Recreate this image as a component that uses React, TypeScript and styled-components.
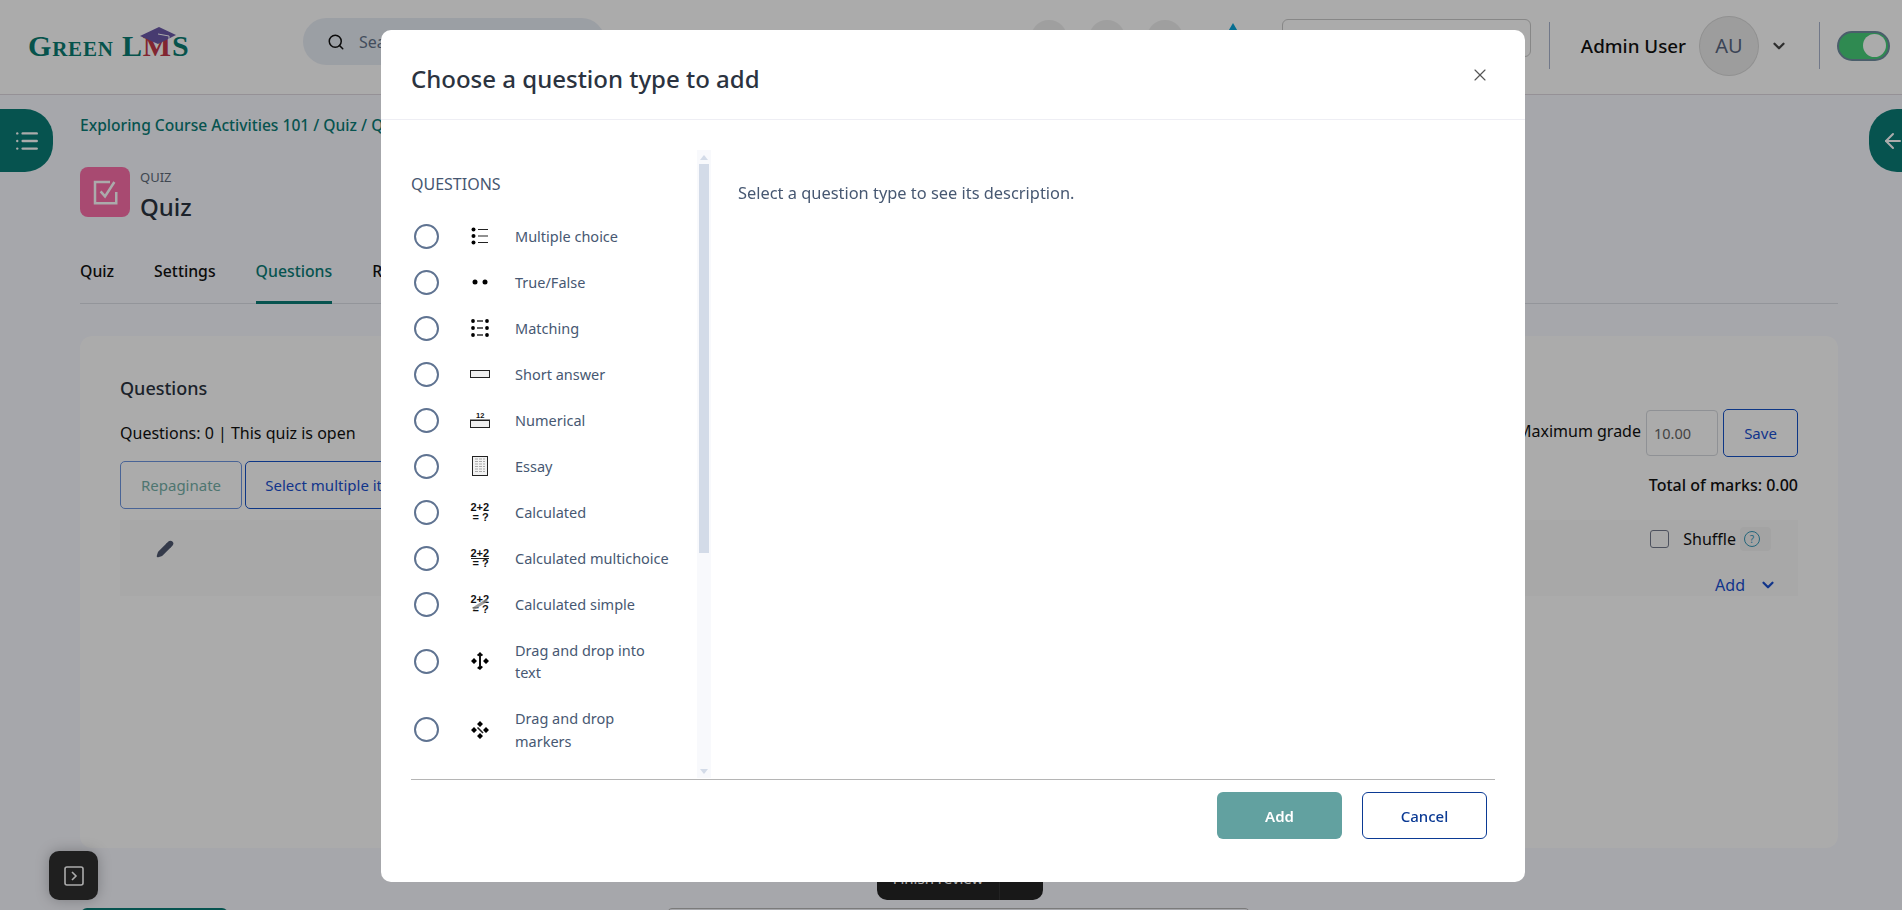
import styled, { createGlobalStyle } from 'styled-components';
import { ChevronDown, Search, X, ArrowLeft, List, Pencil } from 'lucide-react';

const GlobalStyle = createGlobalStyle`
  html, body {
    margin: 0;
    height: 100%;
    overflow: hidden;
    background: #f8f9ff;
    font-family: "Noto Sans", "Open Sans", sans-serif;
  }
  * { box-sizing: border-box; }
`;

const Page = styled.div`
  height: 910px;
  overflow: hidden;
  position: relative;
`;

const Header = styled.header`
  height: 95px;
  background: #fff;
  border-bottom: 1px solid #ded9e0;
  display: flex;
  align-items: center;
  padding: 0 12px 3px 28px;
`;

const Logo = styled.div`
  width: 162px;
  height: 36px;
  margin-top: 0;
  display: flex;
  align-items: center;
  position: relative;
  font-family: "Liberation Serif", serif;
  font-weight: 700;
  font-size: 30px;
  font-variant: small-caps;
  letter-spacing: 0.8px;
  color: #0a7d72;
  white-space: nowrap;
`;

const LogoM = styled.span`
  color: #c23a4a;
`;

const LogoCap = styled.svg`
  position: absolute;
  left: 112px;
  top: -2px;
`;

const SearchBox = styled.div`
  width: 302px;
  height: 47px;
  margin-left: 113px;
  margin-top: -8px;
  border-radius: 24px;
  background: #e8edf5;
  display: flex;
  align-items: center;
  gap: 14px;
  padding-left: 24px;
  color: #64748b;
  font-size: 16px;
  svg { color: #111; }
`;

const Circles = styled.div`
  display: flex;
  gap: 22px;
  margin-left: 426px;
  margin-top: -15px;
`;

const CircleIcon = styled.div`
  width: 36px;
  height: 36px;
  border-radius: 50%;
  background: #eee;
`;

const Diamond = styled.div`
  width: 0;
  height: 0;
  margin-left: 43px;
  margin-top: -33px;
  border-left: 7px solid transparent;
  border-right: 7px solid transparent;
  border-bottom: 12px solid #0aa5d8;
`;

const CourseBox = styled.div`
  width: 249px;
  height: 38px;
  margin: -15px 18px 0 42px;
  border: 1px solid #c9c9c9;
  border-radius: 6px;
`;

const Divider = styled.div`
  width: 1px;
  height: 47px;
  background: #a9b4cc;
`;

const UserName = styled.span`
  font-size: 18.8px;
  font-weight: 500;
  color: #111;
  margin-left: 31px;
`;

const Avatar = styled.div`
  width: 60px;
  height: 60px;
  margin-left: 13px;
  border-radius: 50%;
  background: #ebebeb;
  border: 1px solid #d8d8d8;
  display: flex;
  align-items: center;
  justify-content: center;
  font-size: 20px;
  color: #596680;
`;

const UserChevron = styled(ChevronDown)`
  margin: 0 31px 0 11px;
  color: #444;
`;

const Toggle = styled.div`
  width: 53px;
  height: 30px;
  margin-left: 17px;
  border-radius: 15px;
  background: #46ce7a;
  border: 2px solid #6f8ca0;
  display: flex;
  align-items: center;
  justify-content: flex-end;
  padding-right: 2px;
  &::after {
    content: '';
    width: 23px;
    height: 23px;
    border-radius: 50%;
    background: #fff;
  }
`;

const SideBubble = styled.div<{ $right?: boolean }>`
  position: absolute;
  top: 109px;
  ${(p) => (p.$right ? 'right: -31px;' : 'left: 0;')}
  width: ${(p) => (p.$right ? '64px' : '53px')};
  height: 63px;
  background: #0a7d77;
  border-radius: ${(p) => (p.$right ? '28px' : '0 28px 28px 0')};
  display: flex;
  align-items: center;
  justify-content: ${(p) => (p.$right ? 'flex-start' : 'center')};
  padding-left: ${(p) => (p.$right ? '12px' : '0')};
  color: #fff;
`;

const Main = styled.main`
  padding: 0 64px 0 80px;
`;

const Breadcrumb = styled.div`
  margin-top: 19px;
  height: 22px;
  line-height: 22px;
  font-size: 15.6px;
  font-weight: 500;
  color: #0a7d77;
  white-space: nowrap;
`;

const ActivityHead = styled.div`
  display: flex;
  gap: 10px;
  height: 50px;
  margin-top: 31px;
`;

const ActivityIcon = styled.div`
  width: 50px;
  height: 50px;
  border-radius: 8px;
  background: #fb6fa9;
  display: flex;
  align-items: center;
  justify-content: center;
  color: #fff;
`;

const ActivityKind = styled.div`
  font-size: 13px;
  line-height: 18px;
  color: #5f6b7a;
  margin-top: 1px;
`;

const ActivityName = styled.div`
  font-size: 24px;
  line-height: 32px;
  font-weight: 500;
  color: #2b3340;
  margin-top: 5px;
`;

const Tabs = styled.div`
  display: flex;
  gap: 40px;
  margin-top: 41px;
  height: 46px;
  border-bottom: 1px solid #dcdfe6;
`;

const Tab = styled.div<{ $active?: boolean }>`
  font-size: 15.8px;
  font-weight: 500;
  line-height: 26px;
  height: 46px;
  color: ${(p) => (p.$active ? '#0a7d77' : '#111')};
  border-bottom: ${(p) => (p.$active ? '3px solid #0a7d77' : 'none')};
`;

const Card = styled.section`
  margin-top: 32px;
  height: 512px;
  background: #fff;
  border-radius: 12px;
  padding: 39px 40px 40px;
`;

const TopRow = styled.div`
  display: flex;
  justify-content: space-between;
`;

const CardTitle = styled.div`
  font-size: 18px;
  line-height: 26px;
  font-weight: 500;
  color: #2b3340;
`;

const QuizStatus = styled.div`
  margin-top: 20px;
  font-size: 16px;
  line-height: 24px;
  color: #111;
`;

const GradeArea = styled.div`
  display: flex;
  flex-direction: column;
  align-items: flex-end;
  margin-top: 34px;
`;

const GradeRow = styled.div`
  display: flex;
  align-items: center;
  gap: 5px;
  font-size: 16px;
  color: #111;
`;

const GradeLabel = styled.span`
  margin-bottom: 4px;
`;

const GradeInput = styled.div`
  width: 72px;
  height: 46px;
  border: 1px solid #d6d9de;
  border-radius: 4px;
  display: flex;
  align-items: center;
  padding-left: 7px;
  font-size: 14.5px;
  color: #666;
`;

const OutlineButton = styled.div<{ $faded?: boolean; $width: number }>`
  width: ${(p) => p.$width}px;
  height: 48px;
  flex-shrink: 0;
  border: 1px solid ${(p) => (p.$faded ? '#6e95e0' : '#1652c8')};
  border-radius: 5px;
  display: flex;
  align-items: center;
  justify-content: center;
  font-size: 15px;
  color: ${(p) => (p.$faded ? '#75b0a8' : '#1a4fd0')};
`;

const Totals = styled.div`
  margin-top: 16px;
  font-size: 16px;
  line-height: 24px;
  font-weight: 500;
  color: #111;
`;

const ButtonRow = styled.div`
  display: flex;
  gap: 3px;
  margin-top: 16px;
`;

const SlotBar = styled.div`
  margin-top: 11px;
  height: 76px;
  background: #fbfbfb;
  display: flex;
  justify-content: space-between;
  padding: 20px 15px 0 36px;
`;

const SlotPencil = styled(Pencil)`
  color: #4f5870;
  fill: #4f5870;
`;

const SlotTools = styled.div`
  display: flex;
  flex-direction: column;
  align-items: flex-end;
`;

const ShuffleRow = styled.div`
  display: flex;
  align-items: center;
  height: 24px;
  font-size: 16px;
  color: #111;
  margin-top: -13px;
  margin-right: 12px;
`;

const FakeCheck = styled.div`
  width: 19px;
  height: 18px;
  margin-right: 14px;
  border: 1.5px solid #747a8c;
  border-radius: 3px;
`;

const HelpBox = styled.div`
  width: 31px;
  height: 24px;
  margin-left: 4px;
  padding-left: 4px;
  background: #f4f4f4;
  border-radius: 4px;
  display: flex;
  align-items: center;
`;

const HelpDot = styled.span`
  width: 16px;
  height: 16px;
  border: 1.5px solid #3498b8;
  border-radius: 50%;
  display: flex;
  align-items: center;
  justify-content: center;
  font-size: 10px;
  color: #3498b8;
`;

const AddLink = styled.div`
  margin-top: 22px;
  margin-right: 6px;
  display: flex;
  align-items: center;
  gap: 14px;
  font-size: 16px;
  line-height: 24px;
  color: #1a4fd0;
`;

const BottomBar = styled.div`
  position: absolute;
  left: 877px;
  top: 856px;
  width: 166px;
  height: 44px;
  background: #242424;
  border-radius: 10px;
  display: flex;
  align-items: center;
`;

const BottomLabel = styled.div`
  width: 123px;
  height: 100%;
  border-right: 1px solid #333;
  display: flex;
  align-items: center;
  justify-content: center;
  color: #fff;
  font-size: 15px;
`;

const GreenStub = styled.div`
  position: absolute;
  left: 81px;
  top: 908px;
  width: 147px;
  height: 10px;
  border-radius: 6px 6px 0 0;
  background: #0a7d77;
`;

const OutlineStub = styled.div`
  position: absolute;
  left: 667px;
  top: 908px;
  width: 583px;
  height: 10px;
  border: 1px solid #b8b8b8;
  border-radius: 6px;
`;

const FloatButton = styled.div`
  position: absolute;
  left: 49px;
  top: 851px;
  width: 49px;
  height: 49px;
  border-radius: 10px;
  background: #2f2f2f;
  color: #fff;
  display: flex;
  align-items: center;
  justify-content: center;
  box-shadow: 0 0 14px rgba(0, 0, 0, 0.25);
`;

const Backdrop = styled.div`
  position: fixed;
  inset: 0;
  background: rgba(0, 0, 0, 0.33);
`;

const Modal = styled.div`
  position: fixed;
  left: 381px;
  top: 30px;
  width: 1144px;
  height: 852px;
  background: #fff;
  border-radius: 10px;
  display: flex;
  flex-direction: column;
`;

const ModalHeader = styled.div`
  height: 90px;
  flex-shrink: 0;
  border-bottom: 1px solid #eeeef4;
  display: flex;
  align-items: center;
  justify-content: space-between;
  padding: 8px 35px 0 30px;
`;

const ModalTitle = styled.h2`
  margin: 0;
  font-size: 24px;
  font-weight: 500;
  color: #2b3340;
`;

const CloseIcon = styled(X)`
  color: #555;
  margin-top: -7px;
`;

const ModalBody = styled.div`
  flex: 1;
  min-height: 0;
  display: flex;
  padding: 30px 30px 0;
`;

const TypeColumn = styled.div`
  width: 286px;
  flex-shrink: 0;
  overflow: hidden;
`;

const ScrollRail = styled.div`
  width: 14px;
  flex-shrink: 0;
  background: #f8f9fc;
  display: flex;
  flex-direction: column;
  align-items: center;
  margin-bottom: 1px;
`;

const RailCap = styled.div`
  height: 14px;
  display: flex;
  align-items: center;
  justify-content: center;
`;

const RailArrow = styled.span<{ $down?: boolean }>`
  width: 0;
  height: 0;
  border-left: 4px solid transparent;
  border-right: 4px solid transparent;
  ${(p) => (p.$down ? 'border-top: 5px solid #d3dbe8;' : 'border-bottom: 5px solid #d3dbe8;')}
`;

const RailThumb = styled.div`
  width: 10px;
  height: 389px;
  background: #d3dbe8;
`;

const RailSpacer = styled.div`
  flex: 1;
`;

const GroupLabel = styled.div`
  font-size: 16px;
  line-height: 22px;
  color: #465670;
  margin-top: 23px;
  margin-bottom: 18px;
`;

const TypeRow = styled.label`
  display: flex;
  align-items: center;
`;

const Radio = styled.span`
  width: 25px;
  height: 25px;
  margin-left: 3px;
  flex-shrink: 0;
  border: 2px solid #5f7391;
  border-radius: 50%;
`;

const TypeIcon = styled.span`
  width: 24px;
  height: 24px;
  margin-left: 29px;
  flex-shrink: 0;
  display: flex;
  align-items: center;
  justify-content: center;
`;

const TypeName = styled.span`
  width: 158px;
  margin-left: 23px;
  padding: 11.75px 0;
  font-size: 14.5px;
  line-height: 22.5px;
  color: #475872;
`;

const DescriptionPane = styled.div`
  flex: 1;
  padding: 31px 0 0 27px;
  font-size: 16.4px;
  line-height: 24px;
  color: #475872;
`;

const ModalFooter = styled.div`
  margin: 0 30px;
  height: 103px;
  flex-shrink: 0;
  border-top: 1px solid #b5b5b5;
  display: flex;
  justify-content: flex-end;
  gap: 20px;
  padding: 12px 8px 0 0;
`;

const FooterButton = styled.div<{ $primary?: boolean }>`
  width: 125px;
  height: 47px;
  border-radius: 6px;
  display: flex;
  align-items: center;
  justify-content: center;
  font-size: 15px;
  font-weight: ${(p) => (p.$primary ? 600 : 500)};
  color: ${(p) => (p.$primary ? '#fff' : '#0b3a94')};
  background: ${(p) => (p.$primary ? '#62a1a0' : '#fff')};
  border: ${(p) => (p.$primary ? 'none' : '1px solid #0b3a94')};
`;

const CalcText = styled.text`
  font-family: "Liberation Sans", sans-serif;
  font-weight: 700;
  font-size: 11px;
  fill: #111;
`;

const TinyText = styled.text`
  font-family: "Liberation Sans", sans-serif;
  font-weight: 700;
  font-size: 7.5px;
  fill: #111;
`;

function QuizGlyph() {
  return (
    <svg width="30" height="30" viewBox="0 0 24 24" fill="none" stroke="currentColor" strokeWidth="2">
      <path d="M16 4H4v17h17V12" />
      <path d="M8.5 11.5l3.5 4L19.5 4" />
    </svg>
  );
}

function ExpandGlyph() {
  return (
    <svg width="22" height="22" viewBox="0 0 22 22" fill="none" stroke="currentColor" strokeWidth="1.6">
      <rect x="2" y="2" width="18" height="18" rx="2" />
      <path d="M9 7l4 4-4 4" />
    </svg>
  );
}

function MultiIcon() {
  return (
    <svg width="18" height="18" viewBox="0 0 18 18">
      <circle cx="2.5" cy="2.5" r="2" />
      <circle cx="2.5" cy="9" r="2" />
      <circle cx="2.5" cy="15.5" r="2" />
      <path d="M7 2.5h10M7 9h10M7 15.5h10" stroke="#222" strokeWidth="1.2" />
    </svg>
  );
}

function TrueFalseIcon() {
  return (
    <svg width="18" height="18" viewBox="0 0 18 18">
      <circle cx="4" cy="9" r="2.5" />
      <circle cx="14" cy="9" r="2.5" />
    </svg>
  );
}

function MatchingIcon() {
  return (
    <svg width="18" height="18" viewBox="0 0 18 18">
      {[2, 9, 16].map((y) => (
        <g key={y}>
          <circle cx="2" cy={y} r="1.9" />
          <circle cx="16" cy={y} r="1.9" />
          <path d={`M6 ${y}h6`} stroke="#222" strokeWidth="1.4" />
        </g>
      ))}
    </svg>
  );
}

function ShortIcon() {
  return (
    <svg width="20" height="18" viewBox="0 0 20 18">
      <rect x="0.5" y="5.5" width="19" height="7" fill="#f0f0f0" stroke="#222" />
    </svg>
  );
}

function NumericalIcon() {
  return (
    <svg width="20" height="18" viewBox="0 0 20 18">
      <TinyText x="6" y="7">12</TinyText>
      <path d="M0 9h20" stroke="#222" />
      <rect x="0.5" y="9.5" width="19" height="7" fill="#f0f0f0" stroke="#222" />
    </svg>
  );
}

function EssayIcon() {
  return (
    <svg width="18" height="20" viewBox="0 0 18 20">
      <rect x="1.5" y="0.5" width="15" height="19" fill="#f2f2f2" stroke="#222" />
      <path d="M4 3h10M4 5.5h10M4 8h10M4 10.5h10M4 13h10M4 15.5h10" stroke="#aaa" strokeWidth="1.2" strokeDasharray="3 1" />
    </svg>
  );
}

function CalcIcon({ variant }: { variant?: 'multi' | 'simple' }) {
  return (
    <svg width="20" height="20" viewBox="0 0 20 20">
      <CalcText x="0.5" y="9">2+2</CalcText>
      {variant === 'multi' && <path d="M1 10.5h18" stroke="#222" />}
      <CalcText x="2.5" y="19">= ?</CalcText>
      {variant === 'simple' && <path d="M3 15L17 6" stroke="#888" strokeWidth="3" opacity="0.8" />}
    </svg>
  );
}

const arrowBlobs = 'M9 0l3 3-3 3-3-3zM9 18l3-3-3-3-3 3zM0 9l3-3 3 3-3 3zM18 9l-3-3-3 3 3 3z';

function DragTextIcon() {
  return (
    <svg width="18" height="18" viewBox="0 0 18 18">
      <path d="M9 0l3 3-3 2-3-2zM9 18l3-3-3-2-3 3zM0 9l3-3 3 3-3 3zM18 9l-3-3-3 3 3 3z" />
      <path d="M9 3v12" stroke="#111" strokeWidth="2" />
      <path d="M6.5 3h5" stroke="#111" strokeWidth="1" />
    </svg>
  );
}

function DragMarkerIcon() {
  return (
    <svg width="18" height="18" viewBox="0 0 18 18">
      <path d={arrowBlobs} />
      <path d="M6.5 6.5l5.5 5.5" stroke="#222" strokeWidth="1.6" />
    </svg>
  );
}

const questionTypes = [
  { name: 'Multiple choice', icon: <MultiIcon /> },
  { name: 'True/False', icon: <TrueFalseIcon /> },
  { name: 'Matching', icon: <MatchingIcon /> },
  { name: 'Short answer', icon: <ShortIcon /> },
  { name: 'Numerical', icon: <NumericalIcon /> },
  { name: 'Essay', icon: <EssayIcon /> },
  { name: 'Calculated', icon: <CalcIcon /> },
  { name: 'Calculated multichoice', icon: <CalcIcon variant="multi" /> },
  { name: 'Calculated simple', icon: <CalcIcon variant="simple" /> },
  { name: 'Drag and drop into text', icon: <DragTextIcon /> },
  { name: 'Drag and drop markers', icon: <DragMarkerIcon /> },
];

function App() {
  return (
    <Page>
      <GlobalStyle />
      <Header>
        <Logo>
          Green L<LogoM>M</LogoM>S
          <LogoCap width="36" height="20" viewBox="0 0 36 20">
            <path d="M0 10L19 1L36 9L18 18Z" fill="#6a58a8" />
            <path d="M18 8L29 10V15" fill="none" stroke="#fff" strokeWidth="1" />
          </LogoCap>
        </Logo>
        <SearchBox>
          <Search size={18} />
          Search
        </SearchBox>
        <Circles>
          <CircleIcon />
          <CircleIcon />
          <CircleIcon />
        </Circles>
        <Diamond />
        <CourseBox />
        <Divider />
        <UserName>Admin User</UserName>
        <Avatar>AU</Avatar>
        <UserChevron size={18} strokeWidth={3} />
        <Divider />
        <Toggle />
      </Header>
      <SideBubble>
        <List size={26} strokeWidth={2.2} />
      </SideBubble>
      <SideBubble $right>
        <ArrowLeft size={24} />
      </SideBubble>
      <Main>
        <Breadcrumb>Exploring Course Activities 101 / Quiz / Questions</Breadcrumb>
        <ActivityHead>
          <ActivityIcon>
            <QuizGlyph />
          </ActivityIcon>
          <div>
            <ActivityKind>QUIZ</ActivityKind>
            <ActivityName>Quiz</ActivityName>
          </div>
        </ActivityHead>
        <Tabs>
          <Tab>Quiz</Tab>
          <Tab>Settings</Tab>
          <Tab $active>Questions</Tab>
          <Tab>Results</Tab>
        </Tabs>
        <Card>
          <TopRow>
            <div>
              <CardTitle>Questions</CardTitle>
              <QuizStatus>Questions: 0 | This quiz is open</QuizStatus>
              <ButtonRow>
                <OutlineButton $faded $width={122}>Repaginate</OutlineButton>
                <OutlineButton $width={187}>Select multiple items</OutlineButton>
              </ButtonRow>
            </div>
            <GradeArea>
              <GradeRow>
                <GradeLabel>Maximum grade</GradeLabel>
                <GradeInput>10.00</GradeInput>
                <OutlineButton $width={75}>Save</OutlineButton>
              </GradeRow>
              <Totals>Total of marks: 0.00</Totals>
            </GradeArea>
          </TopRow>
          <SlotBar>
            <SlotPencil size={18} />
            <SlotTools>
              <ShuffleRow>
                <FakeCheck />
                Shuffle
                <HelpBox>
                  <HelpDot>?</HelpDot>
                </HelpBox>
              </ShuffleRow>
              <AddLink>
                Add
                <ChevronDown size={18} strokeWidth={3} />
              </AddLink>
            </SlotTools>
          </SlotBar>
        </Card>
      </Main>
      <GreenStub />
      <OutlineStub />
      <BottomBar>
        <BottomLabel>Finish review</BottomLabel>
      </BottomBar>
      <FloatButton>
        <ExpandGlyph />
      </FloatButton>
      <Backdrop />
      <Modal>
        <ModalHeader>
          <ModalTitle>Choose a question type to add</ModalTitle>
          <CloseIcon size={20} strokeWidth={1.4} />
        </ModalHeader>
        <ModalBody>
          <TypeColumn>
            <GroupLabel>QUESTIONS</GroupLabel>
            {questionTypes.map((type) => (
              <TypeRow key={type.name}>
                <Radio />
                <TypeIcon>{type.icon}</TypeIcon>
                <TypeName>{type.name}</TypeName>
              </TypeRow>
            ))}
          </TypeColumn>
          <ScrollRail>
            <RailCap>
              <RailArrow />
            </RailCap>
            <RailThumb />
            <RailSpacer />
            <RailCap>
              <RailArrow $down />
            </RailCap>
          </ScrollRail>
          <DescriptionPane>Select a question type to see its description.</DescriptionPane>
        </ModalBody>
        <ModalFooter>
          <FooterButton $primary>Add</FooterButton>
          <FooterButton>Cancel</FooterButton>
        </ModalFooter>
      </Modal>
    </Page>
  );
}

export default App;
